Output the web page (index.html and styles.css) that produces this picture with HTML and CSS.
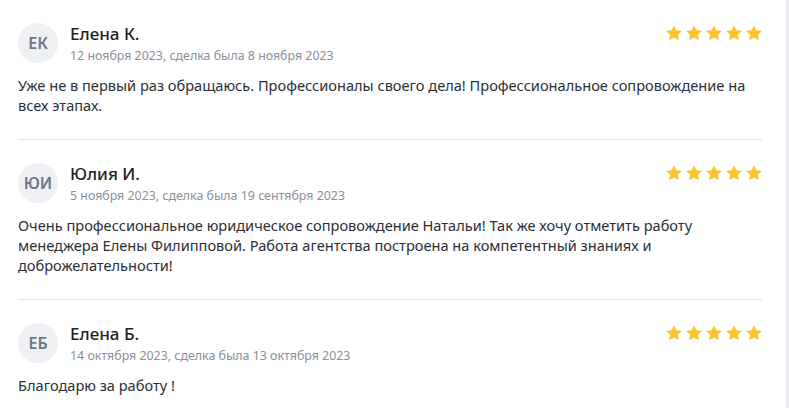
FILE: index.html
```html
<!DOCTYPE html>
<html lang="ru">
<head>
<meta charset="utf-8">
<link rel="stylesheet" href="styles.css">
</head>
<body>
<div class="page">
  <div class="list">
    <article class="review">
      <div class="head">
        <div class="avatar">ЕК</div>
        <div class="who">
          <div class="name">Елена К.</div>
          <div class="date">12 ноября 2023, сделка была 8 ноября 2023</div>
        </div>
        <div class="stars">
          <svg viewBox="1.6 1.6 20.8 20.8"><path d="M12 1.8l3.1 6.6 7.2.9-5.3 5 1.4 7.1L12 17.9l-6.4 3.5 1.4-7.1-5.3-5 7.2-.9z"/></svg>
          <svg viewBox="1.6 1.6 20.8 20.8"><path d="M12 1.8l3.1 6.6 7.2.9-5.3 5 1.4 7.1L12 17.9l-6.4 3.5 1.4-7.1-5.3-5 7.2-.9z"/></svg>
          <svg viewBox="1.6 1.6 20.8 20.8"><path d="M12 1.8l3.1 6.6 7.2.9-5.3 5 1.4 7.1L12 17.9l-6.4 3.5 1.4-7.1-5.3-5 7.2-.9z"/></svg>
          <svg viewBox="1.6 1.6 20.8 20.8"><path d="M12 1.8l3.1 6.6 7.2.9-5.3 5 1.4 7.1L12 17.9l-6.4 3.5 1.4-7.1-5.3-5 7.2-.9z"/></svg>
          <svg viewBox="1.6 1.6 20.8 20.8"><path d="M12 1.8l3.1 6.6 7.2.9-5.3 5 1.4 7.1L12 17.9l-6.4 3.5 1.4-7.1-5.3-5 7.2-.9z"/></svg>
        </div>
      </div>
      <p class="text">Уже не в первый раз обращаюсь. Профессионалы своего дела! Профессиональное сопровождение на всех этапах.</p>
    </article>
    <article class="review">
      <div class="head">
        <div class="avatar">ЮИ</div>
        <div class="who">
          <div class="name">Юлия И.</div>
          <div class="date">5 ноября 2023, сделка была 19 сентября 2023</div>
        </div>
        <div class="stars">
          <svg viewBox="1.6 1.6 20.8 20.8"><path d="M12 1.8l3.1 6.6 7.2.9-5.3 5 1.4 7.1L12 17.9l-6.4 3.5 1.4-7.1-5.3-5 7.2-.9z"/></svg>
          <svg viewBox="1.6 1.6 20.8 20.8"><path d="M12 1.8l3.1 6.6 7.2.9-5.3 5 1.4 7.1L12 17.9l-6.4 3.5 1.4-7.1-5.3-5 7.2-.9z"/></svg>
          <svg viewBox="1.6 1.6 20.8 20.8"><path d="M12 1.8l3.1 6.6 7.2.9-5.3 5 1.4 7.1L12 17.9l-6.4 3.5 1.4-7.1-5.3-5 7.2-.9z"/></svg>
          <svg viewBox="1.6 1.6 20.8 20.8"><path d="M12 1.8l3.1 6.6 7.2.9-5.3 5 1.4 7.1L12 17.9l-6.4 3.5 1.4-7.1-5.3-5 7.2-.9z"/></svg>
          <svg viewBox="1.6 1.6 20.8 20.8"><path d="M12 1.8l3.1 6.6 7.2.9-5.3 5 1.4 7.1L12 17.9l-6.4 3.5 1.4-7.1-5.3-5 7.2-.9z"/></svg>
        </div>
      </div>
      <p class="text">Очень профессиональное юридическое сопровождение Натальи! Так же хочу отметить работу менеджера Елены Филипповой. Работа агентства построена на компетентный знаниях и доброжелательности!</p>
    </article>
    <article class="review">
      <div class="head">
        <div class="avatar">ЕБ</div>
        <div class="who">
          <div class="name">Елена Б.</div>
          <div class="date">14 октября 2023, сделка была 13 октября 2023</div>
        </div>
        <div class="stars">
          <svg viewBox="1.6 1.6 20.8 20.8"><path d="M12 1.8l3.1 6.6 7.2.9-5.3 5 1.4 7.1L12 17.9l-6.4 3.5 1.4-7.1-5.3-5 7.2-.9z"/></svg>
          <svg viewBox="1.6 1.6 20.8 20.8"><path d="M12 1.8l3.1 6.6 7.2.9-5.3 5 1.4 7.1L12 17.9l-6.4 3.5 1.4-7.1-5.3-5 7.2-.9z"/></svg>
          <svg viewBox="1.6 1.6 20.8 20.8"><path d="M12 1.8l3.1 6.6 7.2.9-5.3 5 1.4 7.1L12 17.9l-6.4 3.5 1.4-7.1-5.3-5 7.2-.9z"/></svg>
          <svg viewBox="1.6 1.6 20.8 20.8"><path d="M12 1.8l3.1 6.6 7.2.9-5.3 5 1.4 7.1L12 17.9l-6.4 3.5 1.4-7.1-5.3-5 7.2-.9z"/></svg>
          <svg viewBox="1.6 1.6 20.8 20.8"><path d="M12 1.8l3.1 6.6 7.2.9-5.3 5 1.4 7.1L12 17.9l-6.4 3.5 1.4-7.1-5.3-5 7.2-.9z"/></svg>
        </div>
      </div>
      <p class="text">Благодарю за работу !</p>
    </article>
  </div>
  <div class="scrollstrip"></div>
</div>
</body>
</html>
```

FILE: styles.css
```css
* { box-sizing: border-box; }
html, body { margin: 0; padding: 0; background: #fff; }
body {
  font-family: "Noto Sans", "Open Sans", sans-serif;
  color: #2b2f36;
  overflow: hidden;
}
.page {
  display: flex;
  height: 408px;
}
.list {
  flex: 1;
  padding: 0 24px 0 18px;
}
.scrollstrip {
  width: 3px;
  background: #eceef1;
}
.review {
  padding: 23px 0 24px;
  border-bottom: 1px solid #e3e5e8;
}
.review:last-child { border-bottom: none; }
.head {
  display: flex;
  align-items: flex-start;
}
.avatar {
  width: 40px;
  height: 40px;
  border-radius: 50%;
  background: #eff0f4;
  color: #6e7687;
  font-size: 16px;
  font-weight: 600;
  display: flex;
  align-items: center;
  justify-content: center;
  flex-shrink: 0;
}
.who {
  margin-left: 12px;
  flex: 1;
}
.name {
  font-size: 17px;
  line-height: 20px;
  font-weight: 500;
  color: #1f2226;
  margin-top: 1px;
}
.date {
  font-size: 12.4px;
  line-height: 16px;
  color: #8a909b;
  margin-top: 4px;
}
.stars {
  display: flex;
  gap: 4px;
  margin-top: 2px;
}
.stars svg {
  width: 16px;
  height: 16px;
  fill: #fdc22c;
}
.text {
  margin: 11px 0 0;
  font-size: 14.6px;
  line-height: 20px;
  color: #2b2f36;
}
```
